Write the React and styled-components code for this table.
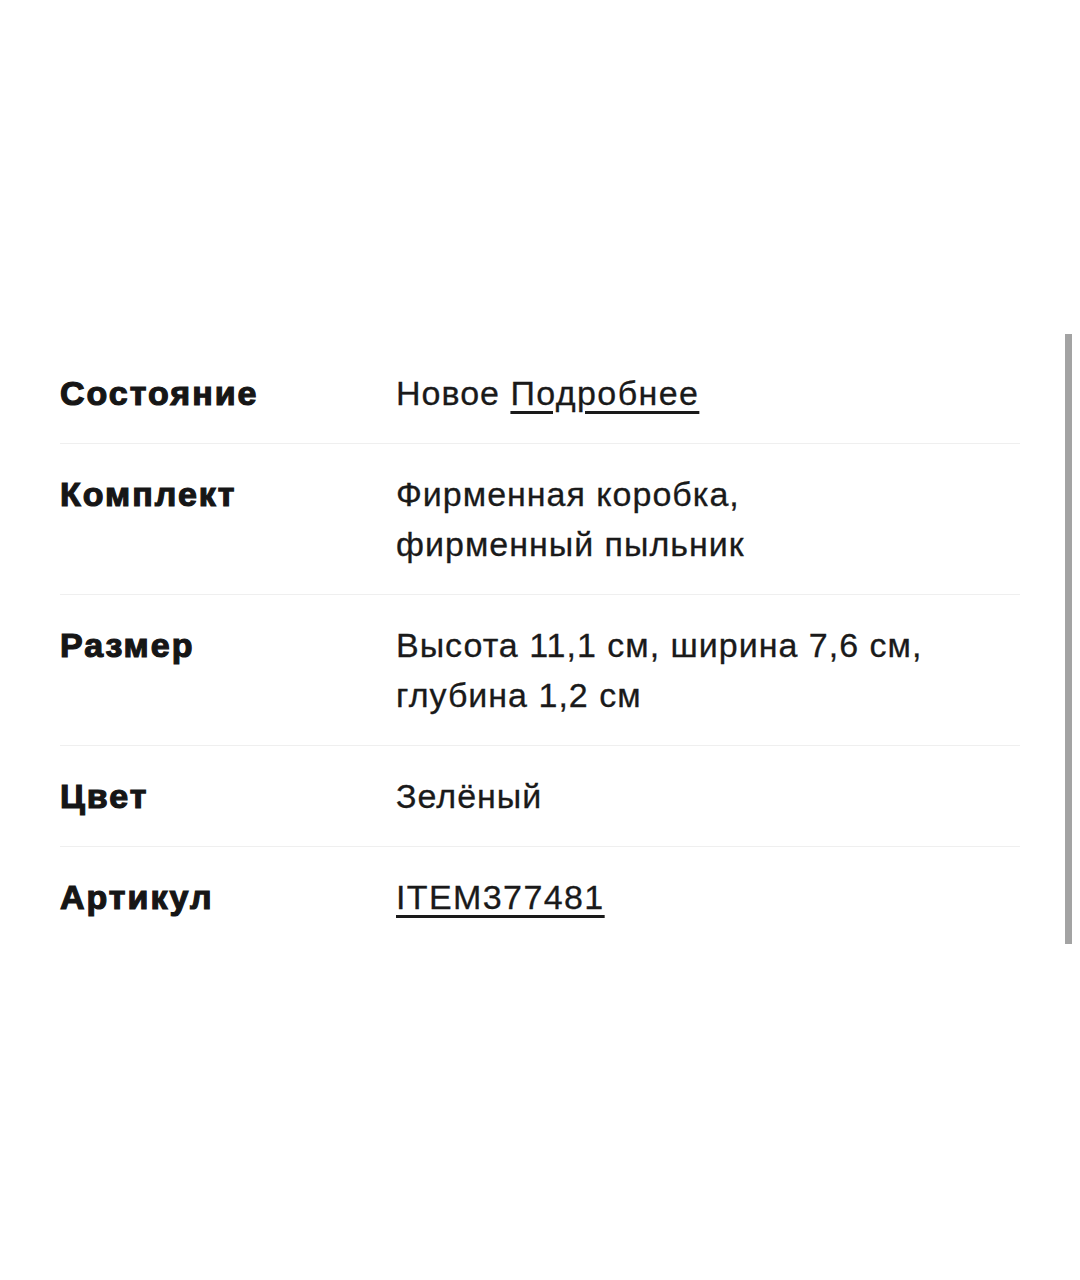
import React from 'react';
import styled, { createGlobalStyle } from 'styled-components';

const GlobalStyle = createGlobalStyle`
  html, body {
    margin: 0;
    padding: 0;
    background: #ffffff;
  }
  body {
    font-family: "Liberation Sans", Arial, sans-serif;
    color: #1a1a1a;
  }
`;

const Page = styled.div`
  width: 1080px;
  height: 1280px;
  padding-top: 343px;
  box-sizing: border-box;
`;

const ScrollArea = styled.div`
  position: relative;
  padding: 0 60px;
`;

const SpecList = styled.div`
  display: flex;
  flex-direction: column;
`;

const Row = styled.div`
  display: grid;
  grid-template-columns: 336px 1fr;
  padding: 25px 0 25px;
  border-bottom: ${({ $last }) => ($last ? 'none' : '1px solid #efefef')};
  font-size: 34px;
  line-height: 50px;
`;

const Label = styled.div`
  font-weight: 700;
  color: #161616;
  -webkit-text-stroke: 1.2px #161616;
  letter-spacing: 2px;
`;

const Value = styled.div`
  font-weight: 400;
  color: #1a1a1a;
  -webkit-text-stroke: 0.3px #1a1a1a;
  letter-spacing: 1px;
`;

const Link = styled.a`
  color: inherit;
  text-decoration: underline;
  text-decoration-thickness: 3px;
  text-underline-offset: 6px;
  letter-spacing: 1.4px;
`;

const Scrollbar = styled.div`
  position: absolute;
  right: 8px;
  top: -9px;
  width: 7px;
  height: 610px;
  background: #a3a3a3;
`;

const specs = [
  { label: 'Состояние', value: <>Новое <Link href="#">Подробнее</Link></> },
  { label: 'Комплект', value: <>Фирменная коробка,<br />фирменный пыльник</> },
  { label: 'Размер', value: <>Высота 11,1 см, ширина 7,6 см,<br />глубина 1,2 см</> },
  { label: 'Цвет', value: 'Зелёный' },
  { label: 'Артикул', value: <Link href="#">ITEM377481</Link> },
];

const App = () => {
  return (
    <>
      <GlobalStyle />
      <Page>
        <ScrollArea>
          <SpecList>
            {specs.map((spec, i) => (
              <Row key={spec.label} $last={i === specs.length - 1}>
                <Label>{spec.label}</Label>
                <Value>{spec.value}</Value>
              </Row>
            ))}
          </SpecList>
          <Scrollbar />
        </ScrollArea>
      </Page>
    </>
  );
};

export default App;
